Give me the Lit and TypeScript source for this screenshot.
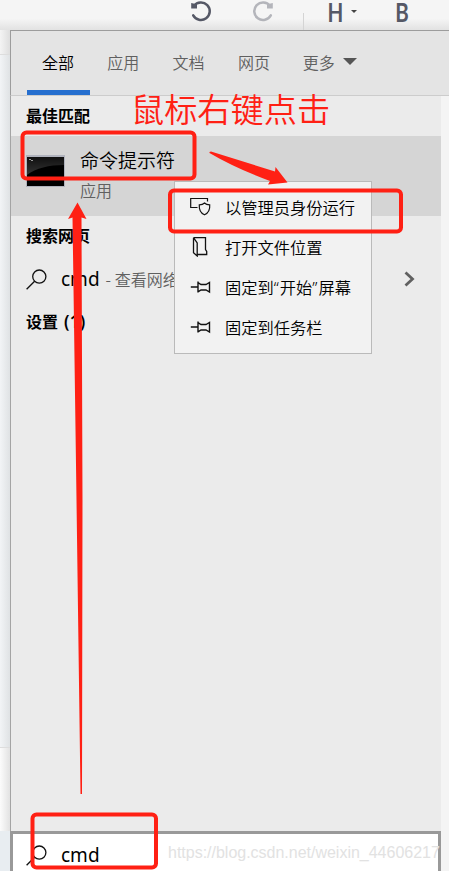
import { LitElement, html, css, svg } from "lit";
import { customElement } from "lit/decorators.js";

const icons = {
  undo: svg`<svg width="22" height="24" viewBox="0 0 22 24" fill="none" stroke="#555866" stroke-width="2.5"><path d="M4 5.800A8.800 8.800 0 1 1 3.200 15.400" stroke-linecap="round"/><path d="M1.200 3v5.500h5.800V4.500L3.500 3.500z" fill="#555866" stroke="none"/></svg>`,
  search: svg`<svg width="21" height="21" viewBox="0 0 21 21" fill="none" stroke="#111" stroke-width="1.3"><circle cx="13.3" cy="7.6" r="6.6"/><path d="M8.6 12.3L.6 20.3"/></svg>`,
  admin: svg`<svg width="22" height="20" viewBox="0 0 22 20" fill="none" stroke="#111" stroke-width="1.2"><path d="M7.5 10.5H.7V1.500H17.500V4.500"/><path d="M14.500 6C13 7.500 11.200 7.800 9.300 7.800c-.4 4.500.6 8 5.200 10 4.600-2 5.600-5.500 5.200-10-1.900 0-3.700-.3-5.200-1.800z"/></svg>`,
  folder: svg`<svg width="22" height="20" viewBox="0 0 22 20" fill="none" stroke="#111" stroke-width="1.300"><path d="M3.500 .7H15.500V12.500l1.200 2v3H7.200M3.500 .7v15l3.700 3.300V6L3.500 .7"/></svg>`,
  pin: svg`<svg width="22" height="20" viewBox="0 0 22 20" fill="none" stroke="#111" stroke-width="1.400"><path d="M.8 10H8M8 4.500v11M8 5.700l3 1.800h5l3.500-2v9.500l-3.500-2h-5l-3 1.800"/></svg>`,
};

@customElement("app-root")
export class AppRoot extends LitElement {
  static styles = css`
    :host { display: block; position: relative; width: 449px; height: 871px; overflow: hidden; background: #f4f4f4; color: #000;
      font: 16px/24px "Noto Sans", "Noto Sans CJK SC", sans-serif; white-space: nowrap; }
    * { box-sizing: border-box; }
    svg { display: block; flex: none; }
    .cjk { font-family: "Noto Sans CJK SC", sans-serif; font-weight: 350; }
    .page { display: flex; flex-direction: column; height: 871px; }
    .editor { height: 30px; display: flex; align-items: flex-start; padding-left: 190px; color: #555866;
      font: 700 27px/22px Lato, sans-serif; background: linear-gradient(#f5f5f5 0 62%, #e2e2e2); }
    .editor .redo { margin-left: 40px; transform: scaleX(-1); opacity: .4; }
    .editor .rule { width: 1px; height: 17px; margin: 13px 0 0 29px; background: #d4d4d4; }
    .editor .h { width: 21px; margin-left: 21px; }
    .editor .b { width: 18px; margin-left: 36px; }
    .glyph { display: flex; justify-content: center; height: 30px; line-height: 24px; transform: scaleX(.76); }
    .small { border: 3.500px solid transparent; border-top-color: #444; border-bottom: 0; margin: 10px 0 0 5px; }
    .body { display: flex; flex: 1; min-height: 0; }
    .gutter { width: 10px; display: flex; flex-direction: column; }
    .gutter div { background: linear-gradient(90deg, #f2f4f6, #dfe2e4); }
    .gutter .g1 { height: 25px; background: linear-gradient(90deg, #f4f4f4, #dedede); border-bottom: 1px solid #ddd; }
    .gutter .g2 { height: 692px; }
    .gutter .g3 { height: 84px; background: linear-gradient(90deg, #fcfcfc, #e2e2e2); border-top: 1px solid #ddd; }
    .gutter .g4 { flex: 1; background: #e8edf1; }
    .panel { width: 439px; border-top: 1px solid #9c9c9c; display: flex; flex-direction: column; }
    .tabs { height: 65px; display: flex; border-left: 1px solid #9c9c9c; border-bottom: 1px solid #ccc; background: #e4e4e4; padding-left: 16px; gap: 2.300px; color: #606060; }
    .tab { width: 63px; height: 64px; display: flex; align-items: center; justify-content: center; padding-bottom: 3px; padding-right: 1px; }
    .tab.on { color: #000; border-bottom: 5px solid #266fcf; padding-bottom: 0; padding-top: 2px; }
    .more { width: 86px; justify-content: flex-start; padding-left: 14.500px; gap: 8px; }
    .caret { border: 7px solid transparent; border-top-color: #555; border-bottom: 0; }
    .results { width: 431px; height: 735px; border-left: 1px solid #a4a4a4; background: #ebebeb; display: flex; flex-direction: column; }
    .heading { height: 40px; display: flex; align-items: center; padding-left: 15px; font: 700 16px/24px "Noto Sans", "Noto Sans CJK SC", sans-serif; }
    .heading.web { height: 42px; padding-bottom: 2px; }
    .heading.set { height: 46px; padding-bottom: 2px; }
    .count { font-weight: 600; font-size: 17px; margin-left: 6px; letter-spacing: .2px; }
    .best { height: 80px; background: #d5d5d5; display: flex; padding: 10px 0 0 15px; }
    .best .name { font-size: 19px; line-height: 28px; }
    .best .kind { color: #606060; line-height: 24px; margin-top: 4px; }
    .best .txt { margin-left: 15px; }
    .console { margin-top: 9px; width: 39px; height: 32px; border: 1px solid #b0b3bd; border-top-width: 2px; background: #000; }
    .web-row { height: 42px; display: flex; align-items: center; padding: 0 26px 0 15px; color: #606060; }
    .query { color: #000; font-size: 19px; margin: 0 6px 0 14px; }
    .web-row .go { margin-left: auto; }
    .searchbox { width: 431px; height: 40px; border: 3px solid #999; border-bottom: 0; background: #fff; display: flex; padding: 11px 0 0 13px; }
    .searchbox .query { line-height: 20px; }
    .menu { position: absolute; left: 174px; top: 181px; width: 198px; height: 173px; border: 1px solid #bababa; background: #f2f2f2; padding-top: 5px; }
    .item { height: 40px; display: flex; align-items: center; padding-left: 15px; gap: 13px; font-size: 16.250px; }
    .q { font-family: "Noto Sans", sans-serif; letter-spacing: 1px; }
    .mark { position: absolute; left: 0; top: 0; }
    .note { position: absolute; left: 131px; top: 84px; font-size: 33.200px; line-height: 48px; color: #ff2014; }
    .water { position: absolute; left: 168px; top: 842px; font: 16px/22px "Liberation Sans", sans-serif; letter-spacing: -.01px; color: #e2e2e2; }
  `;

  render() {
    return html`
      <div class="page">
        <div class="editor">
          ${icons.undo}<span class="redo">${icons.undo}</span><span class="rule"></span>
          <span class="glyph h">H</span><i class="small"></i><span class="glyph b">B</span>
        </div>
        <div class="body">
          <div class="gutter"><div class="g1"></div><div class="g2"></div><div class="g3"></div><div class="g4"></div></div>
          <div class="panel">
            <div class="tabs cjk">
              <div class="tab on">全部</div>
              ${["应用", "文档", "网页"].map((t) => html`<div class="tab">${t}</div>`)}
              <div class="tab more">更多<i class="caret"></i></div>
            </div>
            <div class="results">
              <div class="heading">最佳匹配</div>
              <div class="best cjk">
                <div class="console"><svg width="37" height="29" viewBox="0 0 37 29"><defs><linearGradient id="shine" x2="0" y2="1"><stop stop-color="#101010"/><stop offset="1" stop-color="#343434"/></linearGradient></defs><path d="M0 0H37V8C22 8 9 11 0 18z" fill="url(#shine)"/><path d="M2 2.500h2M4 3.500h2" stroke="#999"/></svg></div>
                <div class="txt"><div class="name">命令提示符</div><div class="kind">应用</div></div>
              </div>
              <div class="heading web">搜索网页</div>
              <div class="web-row">
                ${icons.search}<span class="query">cmd</span><span class="cjk">- 查看网络搜索</span>
                <svg class="go" width="11" height="16" viewBox="0 0 11 16" fill="none" stroke="#606060" stroke-width="2.800"><path d="M1.500 1.500L8.500 8L1.500 14.500"/></svg>
              </div>
              <div class="heading set">设置<span class="count">(1)</span></div>
            </div>
            <div class="searchbox">${icons.search}<span class="query">cmd</span></div>
          </div>
        </div>
      </div>
      <div class="menu cjk">
        <div class="item">${icons.admin}<span>以管理员身份运行</span></div>
        <div class="item">${icons.folder}<span>打开文件位置</span></div>
        <div class="item">${icons.pin}<span>固定到<span class="q">“</span>开始<span class="q">”</span>屏幕</span></div>
        <div class="item">${icons.pin}<span>固定到任务栏</span></div>
      </div>
      <div class="water">https://blog.csdn.net/weixin_44606217</div>
      <svg class="mark" width="449" height="871" viewBox="0 0 449 871" fill="none" stroke="#ff2014" stroke-width="4">
        <rect x="22.500" y="132.500" width="172" height="46" rx="4"/>
        <rect x="170" y="190.500" width="231" height="41" rx="4"/>
        <rect x="32.500" y="814.500" width="123.500" height="53" rx="4"/>
        <path d="M209.500 152L211 151.500L275 171.500L275.500 167L287.500 182.500L268 184.500L270 181Q235 168 209.500 153z" fill="#ff2014" stroke="none"/>
        <path d="M77.500 202.500L86.500 219L81.500 217.500L82.500 500L82 794H80.500L76.500 500L72.500 217.500L68 219z" fill="#ff2014" stroke="none"/>
      </svg>
      <div class="note cjk">鼠标右键点击</div>
    `;
  }
}
